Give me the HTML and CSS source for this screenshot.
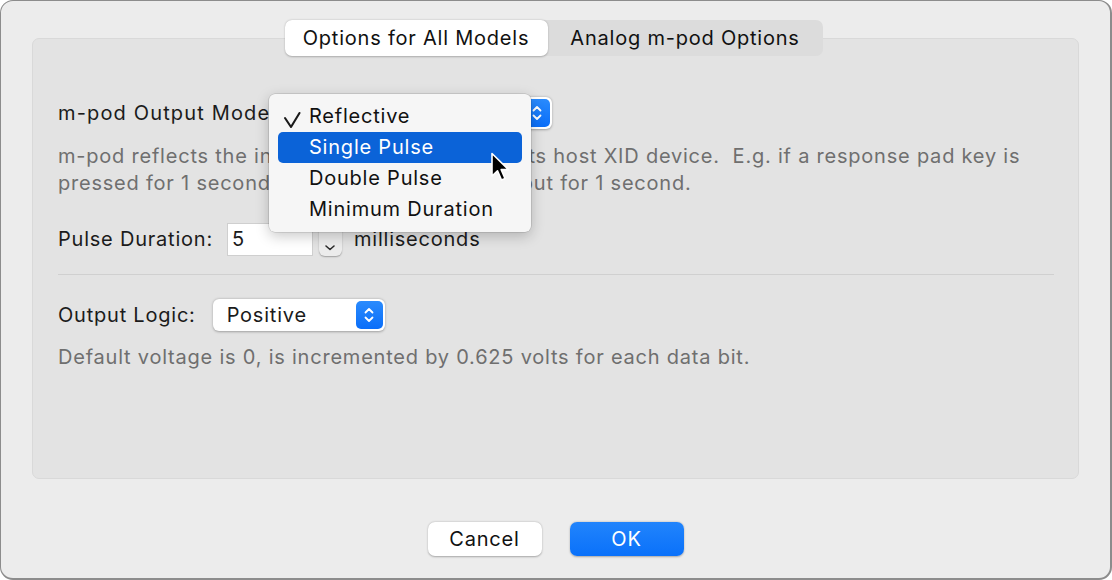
FILE: index.html
```html
<!DOCTYPE html>
<html>
<head>
<meta charset="utf-8">
<link rel="stylesheet" href="styles.css">
</head>
<body>
<div class="window">
  <div class="tabs">
    <div class="tab tab-active">Options for All Models</div>
    <div class="tab">Analog m-pod Options</div>
  </div>
  <div class="panel">
    <div class="row row-mode">
      <span class="label label-mode">m-pod Output Mode:</span>
      <div class="popup popup-mode">
        <span class="popup-text">Reflective</span>
        <span class="popup-stepper">
          <svg width="12" height="18" viewBox="0 0 12 18"><path d="M2.5 6.5 L6 3 L9.5 6.5 M2.5 11.5 L6 15 L9.5 11.5" fill="none" stroke="#fff" stroke-width="1.8" stroke-linecap="round" stroke-linejoin="round"/></svg>
        </span>
      </div>
    </div>
    <p class="desc desc-mode">m-pod reflects the input that it receives from its host XID device.&nbsp; E.g. if a response pad key is<br>pressed for 1 second, m-pod will produce output for 1 second.</p>
    <div class="row row-pulse">
      <span class="label">Pulse Duration:</span>
      <div class="field">5</div>
      <div class="stepper">
        <svg width="22" height="34" viewBox="0 0 22 34"><path d="M7 8 L11 4.5 L15 8" fill="none" stroke="#2a2a2a" stroke-width="1.6" stroke-linecap="round" stroke-linejoin="round"/><path d="M7 24 L11 27.5 L15 24" fill="none" stroke="#2a2a2a" stroke-width="1.6" stroke-linecap="round" stroke-linejoin="round"/></svg>
      </div>
      <span class="label units">milliseconds</span>
    </div>
    <div class="separator"></div>
    <div class="row row-logic">
      <span class="label">Output Logic:</span>
      <div class="popup popup-logic">
        <span class="popup-text">Positive</span>
        <span class="popup-stepper">
          <svg width="12" height="18" viewBox="0 0 12 18"><path d="M2.5 6.5 L6 3 L9.5 6.5 M2.5 11.5 L6 15 L9.5 11.5" fill="none" stroke="#fff" stroke-width="1.8" stroke-linecap="round" stroke-linejoin="round"/></svg>
        </span>
      </div>
    </div>
    <p class="desc">Default voltage is 0, is incremented by 0.625 volts for each data bit.</p>

    <div class="menu">
      <div class="menu-item"><svg class="check" width="18" height="18" viewBox="0 0 18 18"><path d="M2 7 L8 16 L16.5 2" fill="none" stroke="#1a1a1a" stroke-width="2.1" stroke-linecap="round" stroke-linejoin="round"/></svg>Reflective</div>
      <div class="menu-item menu-item-hl">Single Pulse</div>
      <div class="menu-item">Double Pulse</div>
      <div class="menu-item">Minimum Duration</div>
    </div>
    <svg class="cursor" width="22" height="32" viewBox="0 0 22 32"><path d="M2 1.5 L2 24 L7.5 18.8 L11.5 28 L15 26.5 L11.2 17.6 L18.5 17.6 Z" fill="#000" stroke="#fff" stroke-width="1.6" stroke-linejoin="round"/></svg>
  </div>
  <div class="footer">
    <button class="btn">Cancel</button>
    <button class="btn btn-primary">OK</button>
  </div>
</div>
</body>
</html>
```
FILE: styles.css
```css
* { box-sizing: border-box; }
html, body { margin: 0; padding: 0; }
body {
  width: 1112px;
  height: 580px;
  background: #ffffff;
  font-family: Inter, "Liberation Sans", Arial, sans-serif;
  font-size: 20px;
  letter-spacing: 0.78px;
  color: #1b1b1b;
  overflow: hidden;
}
.window {
  width: 1112px;
  height: 580px;
  background: #ececec;
  border: 1px solid #8c8c8c;
  border-right-width: 2px;
  border-bottom-width: 2px;
  border-radius: 13px;
  padding-top: 19px;
  display: flex;
  flex-direction: column;
}
.tabs {
  display: flex;
  align-self: center;
  margin-left: -4px;
  height: 36px;
  background: #dcdcdc;
  border-radius: 7px;
  position: relative;
  z-index: 2;
  margin-bottom: -18px;
}
.tab {
  height: 36px;
  line-height: 36px;
  font-size: 20px;
  color: #111;
  text-align: center;
  white-space: nowrap;
}
.tab-active {
  background: #fff;
  border-radius: 7px;
  box-shadow: 0 0.5px 2px rgba(0,0,0,0.25);
  width: 263px;
}
.tabs .tab:last-child { width: 275px; }
.panel {
  position: relative;
  margin: 0 31px 0 31px;
  height: 441px;
  background: #e3e3e3;
  border: 1px solid #d9d9d9;
  border-radius: 7px;
  padding: 58px 24px 0 25px;
}
.row {
  display: flex;
  align-items: center;
}
.label { white-space: nowrap; }
.label-mode { letter-spacing: 1.15px; }
.popup {
  display: flex;
  align-items: center;
  background: #fff;
  border-radius: 6px;
  box-shadow: 0 0.5px 2.5px rgba(0,0,0,0.3);
  height: 32px;
  padding: 0 2px 0 14px;
  justify-content: space-between;
}
.row-mode { width: 494px; }
.popup-mode { margin-left: auto; width: 274px; }
.popup-logic { margin-left: 17px; width: 172px; }
.popup-stepper {
  width: 27px;
  height: 28px;
  border-radius: 5px;
  background: linear-gradient(#2a8bfd, #0a6ef9);
  display: flex;
  align-items: center;
  justify-content: center;
}
.desc {
  margin: 0;
  color: #6f6f6f;
  line-height: 27px;
  font-size: 20px;
  white-space: nowrap;
}
.desc-mode { margin-top: 14px; }
.row-pulse { margin-top: 25px; }
.field {
  margin-left: 14px;
  width: 86px;
  height: 33px;
  background: #fff;
  border: 1px solid #cfcfcf;
  padding-left: 4px;
  line-height: 31px;
}
.stepper {
  margin-left: 6px;
  width: 23px;
  height: 34px;
  border-radius: 6px;
  background: #ececec;
  box-shadow: 0 0.5px 1.5px rgba(0,0,0,0.3);
  display: flex;
  align-items: center;
  justify-content: center;
}
.units { margin-left: 12px; }
.separator {
  height: 1px;
  background: #d0d0d0;
  margin: 18px 0 0 0;
}
.row-logic { margin-top: 24px; }
.row-logic + .desc { margin-top: 13px; }

.menu {
  position: absolute;
  left: 236px;
  top: 55px;
  width: 262px;
  height: 138px;
  background: #f6f6f6;
  border-radius: 6px;
  box-shadow: 0 0 0 0.5px rgba(0,0,0,0.18), 0 4px 14px rgba(0,0,0,0.22);
  padding: 7px 9px 0 9px;
  z-index: 3;
}
.menu-item {
  position: relative;
  height: 31px;
  line-height: 31px;
  padding-left: 31px;
  color: #111;
  border-radius: 5px;
}
.menu-item-hl {
  background: #0b63d8;
  color: #fff;
}
.check {
  position: absolute;
  left: 5px;
  top: 10px;
}
.cursor {
  position: absolute;
  left: 457px;
  top: 113px;
  z-index: 4;
}
.footer {
  display: flex;
  justify-content: center;
  gap: 28px;
  margin-top: 43px;
}
.btn {
  width: 114px;
  height: 34px;
  border: none;
  border-radius: 7px;
  font-family: Inter, "Liberation Sans", Arial, sans-serif;
  font-size: 20px;
  letter-spacing: 0.78px;
  color: #111;
  background: #fff;
  box-shadow: 0 0.5px 2px rgba(0,0,0,0.3);
  padding: 0;
}
.btn-primary {
  background: linear-gradient(#2184fc, #0a71fa);
  color: #fff;
}
```
